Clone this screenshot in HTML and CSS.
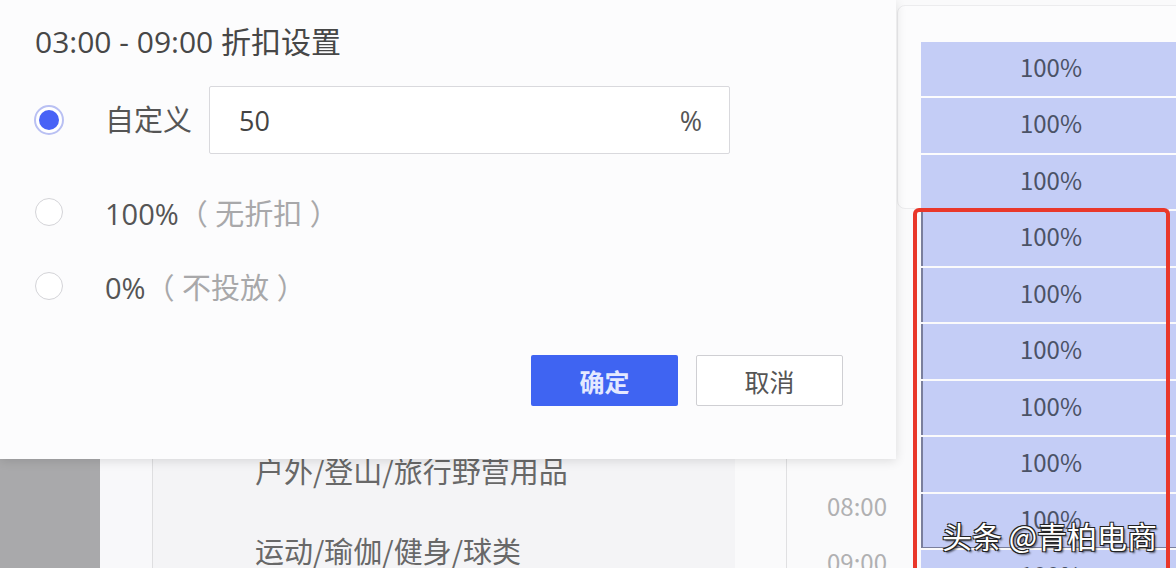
FILE: index.html
```html
<!DOCTYPE html>
<html lang="zh-CN">
<head>
    <meta charset="UTF-8">
    <title>折扣设置</title>
    <link rel="stylesheet" href="styles.css">
</head>
<body>
    <!-- 背景页面 -->
    <div class="app">
        <div class="sidebar"></div>
        <div class="nav"></div>
        <div class="cats">
            <div class="cat">户外/登山/旅行野营用品</div>
            <div class="cat">运动/瑜伽/健身/球类</div>
        </div>
        <div class="spacer"></div>
        <div class="times">
            <div class="time">00:00</div>
            <div class="time">01:00</div>
            <div class="time">02:00</div>
            <div class="time">03:00</div>
            <div class="time">04:00</div>
            <div class="time">05:00</div>
            <div class="time">06:00</div>
            <div class="time">07:00</div>
            <div class="time">08:00</div>
            <div class="time">09:00</div>
        </div>
        <div class="grid">
            <div class="grid-panel"></div>
            <div class="cell">100%</div>
            <div class="cell">100%</div>
            <div class="cell">100%</div>
            <div class="cell sel">100%</div>
            <div class="cell sel">100%</div>
            <div class="cell sel">100%</div>
            <div class="cell sel">100%</div>
            <div class="cell sel">100%</div>
            <div class="cell sel last">100%</div>
            <div class="cell">100%</div>
        </div>
    </div>

    <!-- 红色框选 -->
    <div class="highlight"></div>

    <!-- 折扣设置弹窗 -->
    <div class="popover">
        <div class="title">03:00 - 09:00 折扣设置</div>

        <div class="option option-custom">
            <span class="radio checked"></span>
            <span class="label">自定义</span>
            <div class="input-box">
                <span class="value">50</span>
                <span class="unit">%</span>
            </div>
        </div>

        <div class="option option-full">
            <span class="radio"></span>
            <span class="label">100%<span class="hint">（ 无折扣 ）</span></span>
        </div>

        <div class="option option-zero">
            <span class="radio"></span>
            <span class="label">0%<span class="hint">（ 不投放 ）</span></span>
        </div>

        <div class="button-group">
            <button type="button" class="btn btn-primary">确定</button>
            <button type="button" class="btn btn-default">取消</button>
        </div>
    </div>

    <div class="watermark">头条 @青柏电商</div>
</body>
</html>
```

FILE: styles.css
```css
/* 基础 */
body {
    margin: 0;
    width: 1176px;
    height: 568px;
    overflow: hidden;
    position: relative;
    background-color: #fafafb;
    font-family: "Noto Sans CJK SC", "Noto Sans", sans-serif;
}

/* 背景页面布局 */
.app {
    display: flex;
    height: 100%;
    overflow: hidden;
}

.sidebar {
    width: 100px;
    flex-shrink: 0;
    background-color: #a9a9ab;
}

.nav {
    width: 52px;
    flex-shrink: 0;
    background-color: #f8f8fa;
    border-right: 1px solid #dedee0;
}

.cats {
    width: 582px;
    flex-shrink: 0;
    background-color: #f4f4f6;
    padding: 448px 0 0 102px;
    box-sizing: border-box;
}

.cat {
    height: 80px;
    line-height: 44px;
    font-size: 29px;
    color: #686868;
    white-space: nowrap;
}

.spacer {
    width: 51px;
    flex-shrink: 0;
    background-color: #fafafb;
    border-right: 1px solid #e0e0e2;
}

.times {
    width: 126px;
    flex-shrink: 0;
    padding: 26px 26px 0 0;
    box-sizing: border-box;
    text-align: right;
}

.time {
    height: 56.44px;
    line-height: 56.44px;
    font-size: 24px;
    color: #b0b0b2;
}

.grid {
    position: relative;
    width: 268px;
    flex-shrink: 0;
    padding: 42px 0 0 8px;
    box-sizing: border-box;
}

.grid-panel {
    position: absolute;
    left: -16px;
    top: 5px;
    width: 300px;
    height: 202px;
    border: 1px solid #ececee;
    border-radius: 8px;
    background-color: #fcfcfd;
}

.cell {
    position: relative;
    width: 260px;
    height: 54.44px;
    margin-bottom: 2px;
    line-height: 50px;
    text-align: center;
    font-size: 24px;
    color: #4b5266;
    background-color: #c4cdf6;
}

.cell.sel {
    box-shadow: inset 2px 0 0 #7a7f9c;
}

.cell.last {
    box-shadow: inset 2px 0 0 #7a7f9c, inset 0 -1px 0 #7a7f9c;
}

/* 红色框 */
.highlight {
    position: absolute;
    left: 913px;
    top: 208px;
    width: 257px;
    height: 360px;
    border: 4px solid #e9372a;
    border-bottom: none;
    border-radius: 6px 6px 0 0;
    box-sizing: border-box;
}

/* 弹窗 */
.popover {
    position: absolute;
    left: 0;
    top: 0;
    width: 896px;
    height: 459px;
    padding: 23px 53px 0 35px;
    box-sizing: border-box;
    background-color: #fcfcfd;
    box-shadow: 0 2px 10px rgba(0, 0, 0, 0.12);
    font-family: "Open Sans", "Noto Sans CJK SC", sans-serif;
}

.title {
    font-size: 30px;
    line-height: 38px;
    color: #474747;
}

.option {
    display: flex;
    align-items: center;
}

.option-custom {
    height: 68px;
    margin-top: 25px;
}

.option-full {
    height: 40px;
    margin-top: 38px;
}

.option-zero {
    height: 40px;
    margin-top: 34px;
}

.radio {
    width: 28px;
    height: 28px;
    border: 1px solid #d4d4d8;
    border-radius: 50%;
    box-sizing: border-box;
    margin-right: 42px;
    background-color: #fff;
    position: relative;
}

.radio.checked {
    width: 30px;
    height: 30px;
    margin-left: -1px;
    margin-right: 41px;
    border: 2px solid #b9c0f3;
}

.radio.checked::after {
    content: "";
    position: absolute;
    left: 3px;
    top: 3px;
    width: 20px;
    height: 20px;
    border-radius: 50%;
    background-color: #4862f6;
}

.label {
    font-size: 29px;
    color: #555;
    white-space: nowrap;
}

.option-custom .label {
    width: 104px;
    margin-top: -4px;
}

.hint {
    color: #a8a8aa;
}

.input-box {
    width: 521px;
    height: 68px;
    border: 1px solid #d9d9dd;
    border-radius: 2px;
    box-sizing: border-box;
    background-color: #fff;
    display: flex;
    align-items: center;
    justify-content: space-between;
    padding: 0 27px 0 29px;
    font-size: 27px;
    color: #444;
}

.unit {
    color: #555;
}

/* 按钮 */
.button-group {
    display: flex;
    justify-content: flex-end;
    gap: 18px;
    margin-top: 49px;
}

.btn {
    width: 147px;
    height: 51px;
    border-radius: 2px;
    font-family: "Noto Sans CJK SC", sans-serif;
    font-size: 25px;
    cursor: pointer;
}

.btn-primary {
    border: none;
    background-color: #3f64f2;
    color: #e4e9ff;
    font-weight: bold;
}

.btn-default {
    border: 1px solid #cfcfd3;
    background-color: #fff;
    color: #555;
}

/* 水印 */
.watermark {
    position: absolute;
    left: 942px;
    top: 514px;
    font-size: 30px;
    line-height: 42px;
    color: #fff;
    text-shadow: 1px 1px 0 #222, -1px 1px 0 #222, 1px -1px 0 #222, -1px -1px 0 #222, 2px 2px 2px rgba(0, 0, 0, 0.6);
    white-space: nowrap;
}
```
